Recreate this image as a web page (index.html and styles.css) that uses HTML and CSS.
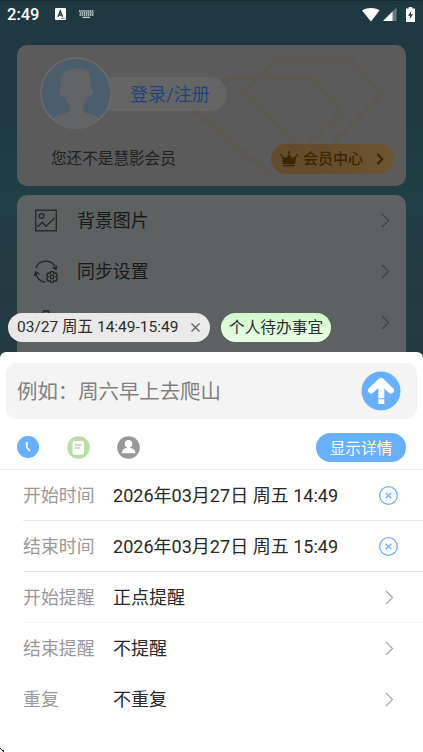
FILE: index.html
```html
<!DOCTYPE html>
<html lang="zh-CN">
<head>
<meta charset="utf-8">
<meta name="viewport" content="width=device-width, initial-scale=1">
<title>慧影</title>
<link rel="stylesheet" href="styles.css">
</head>
<body>
<main class="screen">
  <div class="backdrop">
    <header class="status">
      <span class="clock">2:49</span>
      <svg class="ime" width="11" height="12" viewBox="0 0 11 12"><rect width="11" height="12" rx="1.2" fill="#fff"/><path d="M3 8.7 5.3 3 7.6 8.7M3.8 7H6.8M6.5 10.4H7.5M8.5 10.4H9.5" fill="none" stroke="#1e3940" stroke-width="1.4"/></svg>
      <svg class="keys" width="15" height="9" viewBox="0 0 15 9"><path d="M0 1H15M.7 3H14.5M.5 5H14.5" stroke="#d4dadb" stroke-width="1.4" stroke-dasharray="1.5 .6"/><path d="M3.5 7.3H11" stroke="#d4dadb" stroke-width="1.2"/></svg>
      <span class="spacer"></span>
      <svg width="18" height="15" viewBox="0 0 18 15"><path d="M0 3.5Q3 1 9 1T17.5 3.5L9 14.5Z" fill="#fff"/></svg>
      <svg class="signal" width="14" height="14" viewBox="0 0 14 14"><path d="M0 14 13.5 .5V14Z" fill="#657a7e"/><path d="M0 14 9.5 4.5V14Z" fill="#fff"/></svg>
      <svg class="battery" width="9" height="15" viewBox="0 0 9 15"><path d="M2.7 0H6.3V1.5H9V15H0V1.5H2.7Z" fill="#fff"/><path d="M5.5 3.5 2 8.7H4.2L3.5 12.5 7 7.3H4.8Z" fill="#1e3940"/></svg>
    </header>

    <section class="profile">
      <svg class="pattern" width="389" height="141" viewBox="0 0 389 141">
        <path d="M296 32H213L178 67 254 131M294 32 324 67 286 104M259 15H334L365 50 312 102M259 15 226 48 284 102" fill="none" stroke="#5d5851" stroke-width="5"/>
      </svg>
      <div class="account">
        <svg class="avatar" width="72" height="72" viewBox="0 0 72 72">
          <circle cx="36" cy="36" r="35" fill="#4a5e6c" stroke="#68696a" stroke-width="2"/>
          <path d="M21 31Q19 20 24 17Q25 12 31 13Q38 9 44 13Q47 14 48 12Q49 18 50 20Q52 25 51 31Q55 33 52 38Q50 41 48 39Q46 45 43 48V53Q44 56 50 57Q57 59 60 61Q50 71 36 71T12 61Q16 58 22 57Q29 56 30 52V48Q26 45 24 39Q21 41 20 36Q18 33 21 31Z" fill="#626466"/>
        </svg>
        <div class="login">登录/注册</div>
      </div>
      <div class="member">
        <span>您还不是慧影会员</span>
        <div class="center-link">
          <svg width="18" height="16" viewBox="0 0 18 16"><path d="M1.6 4.5 6 7.2 9 2.5 12 7.2 16.4 4.5 15 13H3Z" fill="#3b2600"/><path d="M3.3 14.5H14.7" stroke="#3b2600" stroke-width="1.4"/><circle cx="9" cy="1.4" r="1.1" fill="#3b2600"/><circle cx="1.2" cy="4" r="1" fill="#3b2600"/><circle cx="16.8" cy="4" r="1" fill="#3b2600"/></svg>
          <b>会员中心</b>
          <svg class="go" width="8" height="12" viewBox="0 0 8 12"><path d="M1.5 1 6.2 6 1.5 11" fill="none" stroke="#352408" stroke-width="2"/></svg>
        </div>
      </div>
    </section>

    <section class="menu">
      <div class="menu-row">
        <svg width="26" height="26" viewBox="0 0 26 26"><g fill="none" stroke="#252727" stroke-width="1.3"><rect x="2.7" y="2.2" width="20.6" height="20.6"/><circle cx="8.5" cy="8" r="2.4"/><path d="M4.5 19 9.3 14.2 13 18.2 21.5 10"/></g></svg>
        <span>背景图片</span>
        <svg class="chev" width="9" height="15" viewBox="0 0 9 15"><path d="M1 1 7.5 7.5 1 14"/></svg>
      </div>
      <div class="menu-row">
        <svg width="26" height="26" viewBox="0 0 26 26"><g fill="none" stroke="#222424" stroke-width="1.3"><path d="M3 9A10.4 10.4 0 0 1 22.7 9.5M19.5 8.5 23 10.5 23.7 6.5M12.5 23.2A10.4 10.4 0 0 1 2.7 13.5M1.6 17 2.6 12.7 6.5 15.2"/><path d="M17.7 12.7H20.3L20.8 14.5 23 14 24.3 16.2 23 17.9 24.3 19.7 23 22 20.8 21.5 20.3 23.3H17.7L17.2 21.5 15 22 13.7 19.7 15 18 13.7 16.2 15 14 17.2 14.5Z"/><circle cx="19" cy="18" r="1.8"/></g></svg>
        <span>同步设置</span>
        <svg class="chev" width="9" height="15" viewBox="0 0 9 15"><path d="M1 1 7.5 7.5 1 14"/></svg>
      </div>
      <div class="menu-row">
        <svg width="26" height="26" viewBox="0 0 26 26"><g fill="none" stroke="#222424" stroke-width="1.4"><path d="M10.5 1H15.5L16.2 4 19 5.2 21.5 3.7 24 7.5 22 10V14L24 16.5 21.5 20.3 19 18.8 16.2 20 15.5 23H10.5L9.8 20 7 18.8 4.5 20.3 2 16.5 4 14V10L2 7.5 4.5 3.7 7 5.2 9.8 4Z"/><circle cx="13" cy="12" r="4"/></g></svg>
        <span>应用设置</span>
        <svg class="chev" width="9" height="15" viewBox="0 0 9 15"><path d="M1 1 7.5 7.5 1 14"/></svg>
      </div>
    </section>
  </div>

  <div class="composer">
    <div class="chips">
      <div class="chip time">03/27 周五 14:49-15:49<svg width="9" height="9" viewBox="0 0 9 9"><path d="M.5 .5 8.5 8.5M8.5 .5 .5 8.5" stroke="#555" stroke-width="1.1"/></svg></div>
      <div class="chip list">个人待办事宜</div>
    </div>
    <section class="sheet">
      <div class="entry">
        <span>例如：周六早上去爬山</span>
        <svg width="40" height="40" viewBox="0 0 40 40"><circle cx="20" cy="20" r="19.5" fill="#67afff"/><path d="M10.3 19.3 20 10 29.7 19.3" fill="none" stroke="#fff" stroke-width="6.4" stroke-linecap="round" stroke-linejoin="round"/><path d="M20.3 12V27.2M20.3 28.2V33" fill="none" stroke="#fff" stroke-width="6"/></svg>
      </div>
      <div class="tools">
        <svg width="22" height="22" viewBox="0 0 22 22"><circle cx="11" cy="11" r="11" fill="#67afff"/><path d="M9.8 6V11.5L13 15" fill="none" stroke="#fff" stroke-width="1.7"/></svg>
        <svg width="23" height="23" viewBox="0 0 23 23"><circle cx="11.5" cy="11.5" r="11.3" fill="#b9dda9"/><rect x="5.5" y="5" width="11.5" height="13.8" rx="2" fill="#fff"/><path d="M7.5 9H15M7.5 12H13" stroke="#b9dda9" stroke-width="1.3"/></svg>
        <svg width="23" height="23" viewBox="0 0 23 23"><circle cx="11.5" cy="11.5" r="11.3" fill="#999"/><circle cx="11.5" cy="7.8" r="3.8" fill="#fff"/><path d="M10 10.5H13V11.7Q18.4 12.5 18.4 17.2H4.8Q4.8 12.5 10 11.7Z" fill="#fff"/></svg>
        <div class="details">显示详情</div>
      </div>
      <div class="fields">
        <div class="field"><span class="label">开始时间</span><span class="value">2026年03月27日 周五 14:49</span><svg class="clear" width="20" height="20" viewBox="0 0 20 20"><circle cx="10.5" cy="10.5" r="8.8"/><path d="M7.7 7.7 13.3 13.3M13.3 7.7 7.7 13.3"/></svg></div>
        <div class="field"><span class="label">结束时间</span><span class="value">2026年03月27日 周五 15:49</span><svg class="clear" width="20" height="20" viewBox="0 0 20 20"><circle cx="10.5" cy="10.5" r="8.8"/><path d="M7.7 7.7 13.3 13.3M13.3 7.7 7.7 13.3"/></svg></div>
        <div class="field faint"><span class="label">开始提醒</span><span class="value">正点提醒</span><svg class="next" width="9" height="15" viewBox="0 0 9 15"><path d="M1 1 7.5 7.5 1 14"/></svg></div>
        <div class="field plain"><span class="label">结束提醒</span><span class="value">不提醒</span><svg class="next" width="9" height="15" viewBox="0 0 9 15"><path d="M1 1 7.5 7.5 1 14"/></svg></div>
        <div class="field plain"><span class="label">重复</span><span class="value">不重复</span><svg class="next" width="9" height="15" viewBox="0 0 9 15"><path d="M1 1 7.5 7.5 1 14"/></svg></div>
      </div>
      <svg class="corner" width="4" height="4" viewBox="0 0 4 4"><path d="M0 0H1V1H0ZM1 1H2V2H1ZM2 2H4V4H3V3H2Z" fill="#111"/></svg>
    </section>
  </div>
</main>
</body>
</html>
```
FILE: styles.css
```css
* { box-sizing: border-box; }
body {
  margin: 0;
  font-family: Roboto, "Noto Sans CJK SC", sans-serif;
  font-size: 17.9px;
  line-height: 24px;
  color: #222;
}
svg { display: block; flex: none; overflow: visible; }
.screen {
  display: grid;
  width: 423px;
  height: 752px;
  overflow: hidden;
  background: linear-gradient(#1e3940 0, #1e3940 100px, #203f45 190px, #223c42 260px, #233a40 360px);
}
.backdrop, .composer { grid-area: 1 / 1; min-height: 0; }
.backdrop { overflow: hidden; height: 400px; }

.status {
  display: flex;
  align-items: center;
  height: 28px;
  padding: 0 8px 0 7px;
  border-top: 1px solid #172b30;
  color: #fff;
}
.clock { width: 48px; font-size: 16.5px; font-weight: 500; }
.status svg { margin-bottom: 1px; }
.keys { margin-left: 13px; }
.spacer { flex: 1; }
.signal { margin-left: 3px; }
.battery { margin-left: 9px; }

.profile {
  position: relative;
  height: 141px;
  margin: 17px 17px 0;
  padding-top: 12px;
  border-radius: 10px;
  background: #5b5b5b;
  overflow: hidden;
}
.pattern { position: absolute; inset: 0; opacity: .85; }
.account { position: relative; display: flex; align-items: center; padding-left: 23px; }
.avatar { z-index: 1; }
.login {
  width: 125px;
  height: 34px;
  margin: 2px 0 0 -10px;
  padding-left: 28px;
  border-radius: 0 17px 17px 0;
  background: #656565;
  color: #1e4579;
  font-size: 18.1px;
  line-height: 36px;
}
.member {
  position: relative;
  display: flex;
  align-items: center;
  justify-content: space-between;
  margin-top: 14px;
  padding: 0 12px 0 34px;
  font-size: 15.6px;
  color: #202020;
}
.center-link {
  display: flex;
  align-items: center;
  width: 123px;
  height: 30px;
  margin-top: 1px;
  padding: 0 10px 0 9px;
  border-radius: 15px;
  background: linear-gradient(115deg, #624a2c, #654d2d 50%, #6e5532);
  color: #3b2600;
}
.center-link b { margin-left: 5px; font-size: 15px; font-weight: 500; }
.go { margin-left: auto; }

.menu {
  height: 220px;
  margin: 9px 17px 0;
  border-radius: 10px;
  background: #5d6162;
  color: #181919;
}
.menu-row { display: flex; align-items: center; height: 51px; padding: 0 16px; }
.menu-row span { flex: 1; margin-left: 18px; padding-top: 1px; }
.chev path, .next path { fill: none; stroke: #3d4041; stroke-width: 1.1; }
.next path { stroke: #a5a5a5; }

.composer { display: flex; flex-direction: column; position: relative; padding-top: 312.5px; }
.chips { display: flex; gap: 11px; height: 39.5px; padding-left: 8px; font-size: 15.7px; }
.chip { display: flex; align-items: center; height: 29px; border-radius: 15px; color: #2c2c2c; }
.time { width: 202px; padding: 0 10px 0 9px; justify-content: space-between; background: rgba(241, 241, 241, .95); font-size: 15.5px; line-height: 30px; }
.list { padding: 1px 8px 0; background: linear-gradient(#d0facb, #e9fee5); }
.sheet {
  position: relative;
  flex: 1;
  padding-top: 11px;
  border-radius: 6px 6px 0 0;
  background: #fff;
}
.entry {
  display: flex;
  align-items: center;
  justify-content: space-between;
  height: 56px;
  margin: 0 6px;
  padding: 0 16.5px 0 11px;
  border-radius: 11px;
  background: #f4f4f4;
  color: #808080;
  font-size: 20.4px;
}
.entry span { padding-top: 2px; }
.tools {
  display: flex;
  align-items: center;
  height: 51px;
  padding: 6px 17px 0;
  gap: 27.5px;
  border-bottom: 1px solid #eee;
}
.details {
  width: 90px;
  height: 29px;
  margin-left: auto;
  border-radius: 15px;
  background: #67afff;
  color: #fff;
  font-size: 15.7px;
  line-height: 31px;
  text-align: center;
}
.fields { margin-left: 23px; }
.field {
  display: flex;
  align-items: center;
  height: 51px;
  padding-right: 25px;
  border-bottom: 1px solid #e8e8e8;
}
.faint { border-color: #f7f7f7; }
.plain { border-color: transparent; }
.field span { padding-top: 2px; }
.label { width: 90px; color: #999; }
.value { flex: 1; color: #282828; font-size: 18.05px; }
.clear { fill: none; stroke: #70b4ff; stroke-width: 1.3; }
.next { margin-right: 4px; }
.corner { position: absolute; left: 0; bottom: 0; }
```
